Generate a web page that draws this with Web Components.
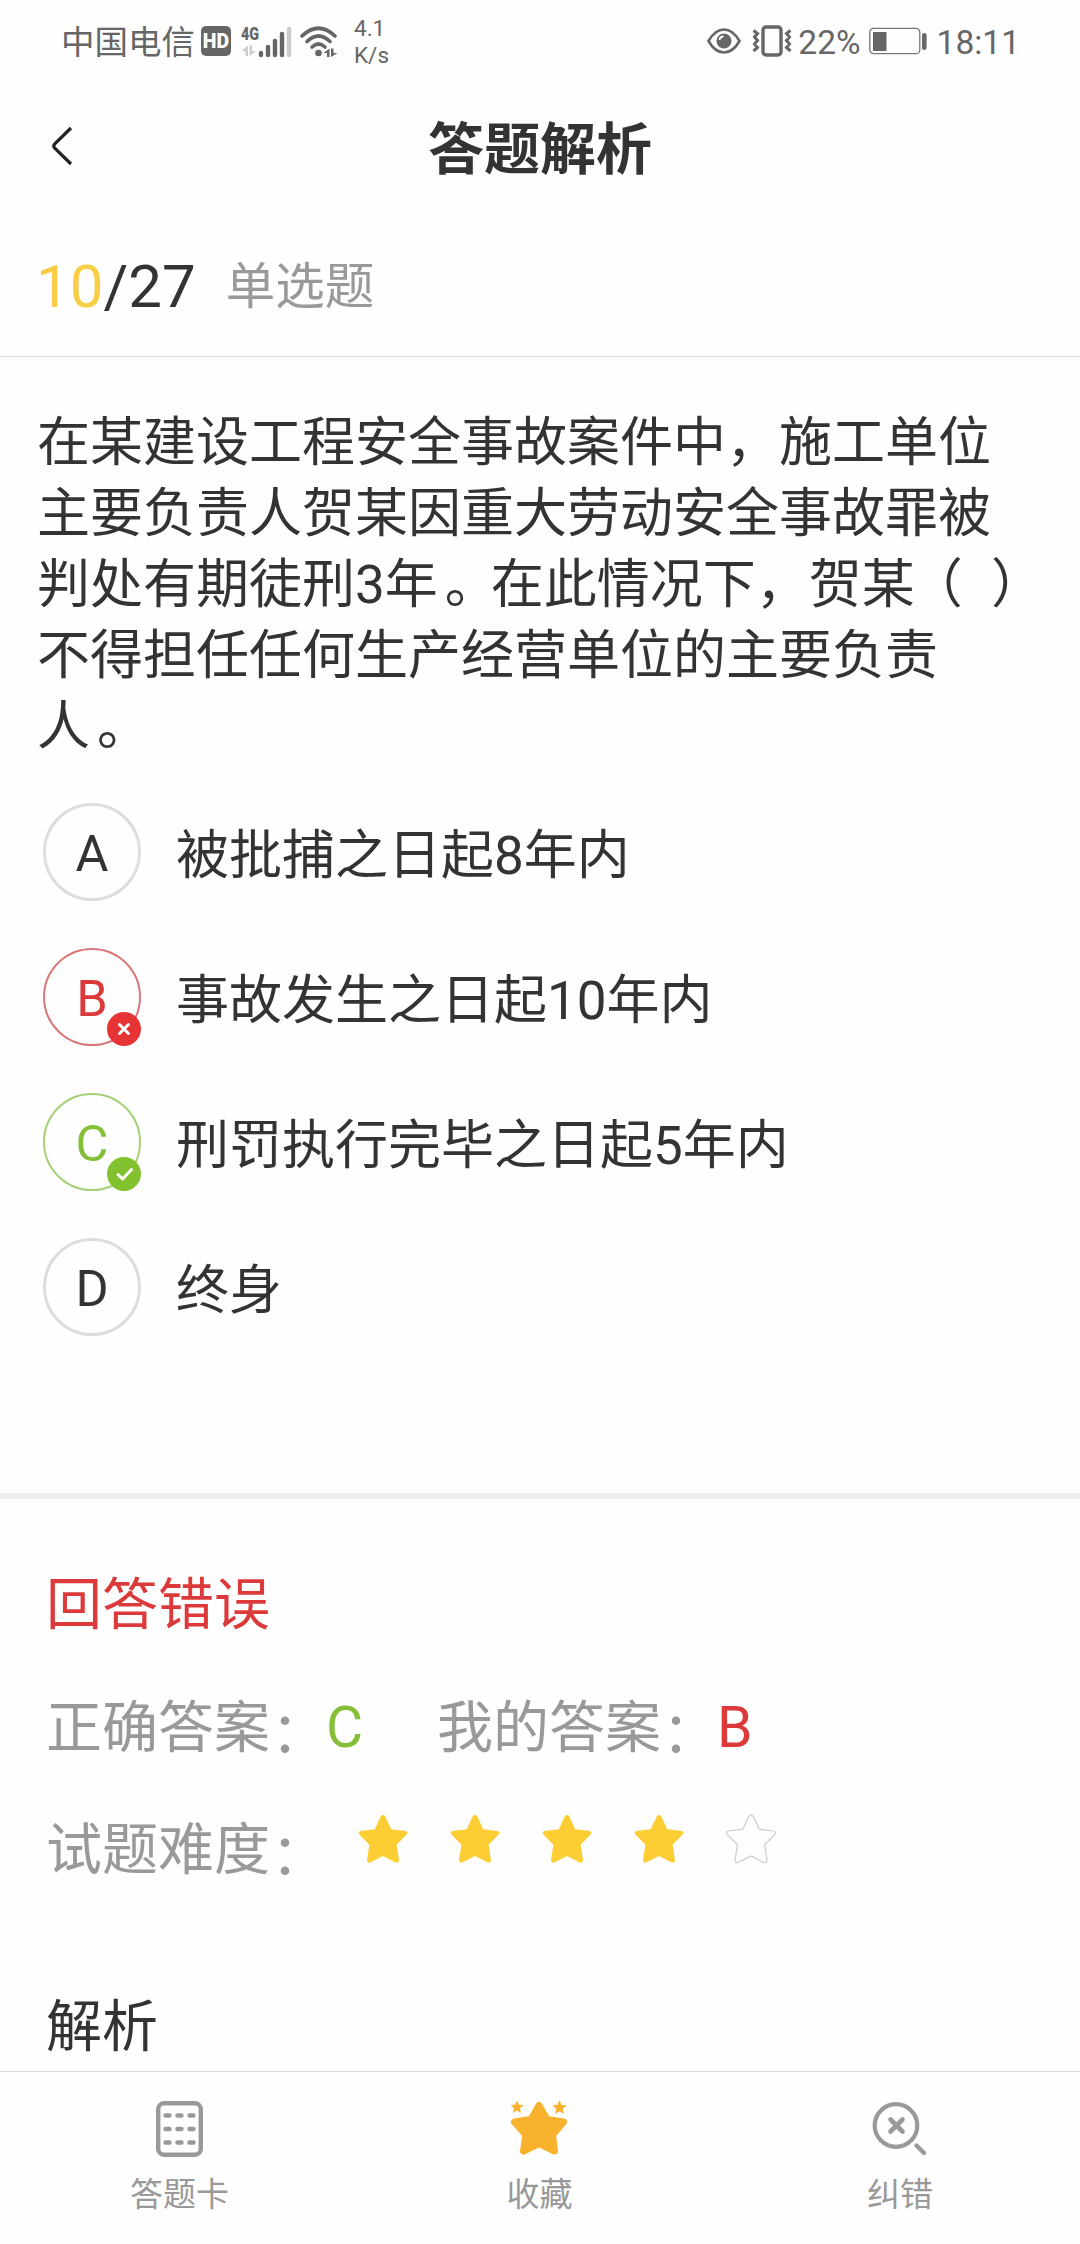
<!DOCTYPE html>
<html lang="zh-CN">
<head>
<meta charset="utf-8">
<title>答题解析</title>
<style>
  body{
    margin: 0;
    background: #fefefe;
    color: #333;
    font-family: Roboto, "Noto Sans CJK SC", sans-serif;
  }
</style>
</head>
<body>
<quiz-page>
  <status-bar slot="top"></status-bar>
  <page-header slot="top">答题解析</page-header>
  <question-counter current="10" total="27">单选题</question-counter>
  <question-text>在某建设工程安全事故案件中，施工单位<br>主要负责人贺某因重大劳动安全事故罪被<br>判处有期徒刑3年<span class="stop">。</span>在此情况下，贺某<span class="open">（</span> <span class="close">）</span><br>不得担任任何生产经营单位的主要负责<br>人<span class="stop">。</span></question-text>
  <answer-option letter="A">被批捕之日起8年内</answer-option>
  <answer-option letter="B" status="wrong">事故发生之日起10年内</answer-option>
  <answer-option letter="C" status="right">刑罚执行完毕之日起5年内</answer-option>
  <answer-option letter="D">终身</answer-option>
  <answer-result right="C" mine="B">
    <star-rating value="4"></star-rating>
  </answer-result>
  <tab-bar slot="bottom">
    <tab-item icon="card">答题卡</tab-item>
    <tab-item icon="favorite">收藏</tab-item>
    <tab-item icon="report">纠错</tab-item>
  </tab-bar>
</quiz-page>

<script>
class BaseElement extends HTMLElement {
  constructor() {
    super();
    this.attachShadow({ mode: 'open' });
  }

  connectedCallback() {
    this.shadowRoot.innerHTML = this.render();
  }
}

class QuizPage extends BaseElement {
  render() {
    return `
<style>
  :host{
    display: flex;
    flex-direction: column;
    width: 1080px;
    height: 2244px;
    overflow: hidden;
  }

  main{
    flex: 1;
    min-height: 0;
    overflow: hidden;
  }
</style>
<slot name="top"></slot>
<main><slot></slot></main>
<slot name="bottom"></slot>`;
  }
}

class StatusBar extends BaseElement {
  render() {
    return `
<style>
  :host{
    display: flex;
    justify-content: space-between;
    align-items: center;
    box-sizing: border-box;
    height: 82px;
    padding: 0 60px 0 61px;
    color: #666;
    font-size: 33.5px;
    line-height: 40px;
  }

  .side{
    display: flex;
    align-items: center;
    white-space: nowrap;
  }

  .side > span:not(.hd){
    padding-top: 3px;
  }

  svg{
    display: block;
    flex-shrink: 0;
  }

  .hd{
    width: 30px;
    height: 30px;
    margin-left: 6px;
    border-radius: 5px;
    background: #666;
    color: #fff;
    font-size: 19.5px;
    font-weight: 900;
    line-height: 31px;
    text-align: center;
  }

  .signal{
    margin-left: 9px;
  }

  .wifi{
    margin-left: 8px;
  }

  .speed{
    margin-left: 16px;
    padding-top: 2px;
    font-size: 22.5px;
    line-height: 27px;
  }

  .eye{
    margin-right: 11px;
  }

  .vibrate{
    margin-right: 5px;
  }

  .battery{
    margin: 0 10px 0 8px;
  }
</style>
<div class="side">
  <span>中国电信</span>
  <span class="hd">HD</span>
  <svg class="signal" width="52" height="34" viewBox="0 0 52 34">
    <text x="1" y="15.500" font-family="Roboto" font-size="18.500" font-weight="900" fill="#666" textLength="18" lengthAdjust="spacingAndGlyphs">4G</text>
    <path d="M1.500 27L8 21.500V32H5.500V27ZM16 27L9.500 32V21.500H12V27Z" fill="#ccc"/>
    <g stroke="#666" stroke-width="4.400" stroke-linecap="round">
      <path d="M21 29V31M28 23V31M35 17V31M42 10V31"/>
      <path d="M49 5V31" stroke="#ccc"/>
    </g>
  </svg>
  <svg class="wifi" width="38" height="34" viewBox="0 0 38 34">
    <g fill="none" stroke="#666" stroke-width="3.600" stroke-linecap="round">
      <path d="M2 12Q18.500-3.500 35 12"/>
      <path d="M7 17.500Q18.500 6.500 30 17.500"/>
      <path d="M12 23Q18.500 17 25 23"/>
    </g>
    <circle cx="18.500" cy="29" r="3.300" fill="#666"/>
    <path d="M23.500 29L29.500 24.500V33H27V29ZM37.500 29L31 33V24.500H33.500V29Z" fill="#666"/>
  </svg>
  <div class="speed">4.1<br>K/s</div>
</div>
<div class="side">
  <svg class="eye" width="34" height="26" viewBox="0 0 34 26">
    <path d="M1.500 13Q8 1.500 17 1.500T32.500 13Q26 24.500 17 24.500T1.500 13Z" fill="none" stroke="#666" stroke-width="2.600"/>
    <circle cx="17" cy="13" r="7.500" fill="#666"/>
    <path d="M12.500 12Q13 8.500 16.500 8.500" fill="none" stroke="#fefefe" stroke-width="1.800"/>
  </svg>
  <svg class="vibrate" width="41" height="32" viewBox="0 0 41 32">
    <rect x="11" y="2" width="18" height="28" rx="3" fill="none" stroke="#666" stroke-width="3.400"/>
    <path d="M1.500 5.500L5.500 8.500L2.500 12L5.500 15.500L2.500 19L5.500 22.500L1.500 26M38.500 5.500L34.500 8.500L37.500 12L34.500 15.500L37.500 19L34.500 22.500L38.500 26" fill="none" stroke="#666" stroke-width="3"/>
  </svg>
  <span>22%</span>
  <svg class="battery" width="58" height="28" viewBox="0 0 58 28">
    <rect x=".8" y="1.300" width="50" height="25.400" rx="4" fill="none" stroke="#777" stroke-width="1.300"/>
    <rect x="4" y="5" width="13.500" height="19" fill="#666"/>
    <rect x="53" y="6" width="4.600" height="17" rx="2.300" fill="#666"/>
  </svg>
  <span>18:11</span>
</div>`;
  }
}

class PageHeader extends BaseElement {
  render() {
    return `
<style>
  :host{
    display: grid;
    grid-template-columns: 120px 1fr 120px;
    align-items: center;
    height: 130px;
  }

  svg{
    display: block;
    margin: -3px 0 0 50px;
  }

  h1{
    margin: 6px 0 0;
    font-size: 56px;
    font-weight: bold;
    line-height: 80px;
    text-align: center;
  }
</style>
<svg width="24" height="40" viewBox="0 0 24 40">
  <path d="M21 2L4.500 18.200Q3 20 4.500 21.800L21 38" fill="none" stroke="#222" stroke-width="3.200"/>
</svg>
<h1><slot></slot></h1>`;
  }
}

class QuestionCounter extends BaseElement {
  render() {
    return `
<style>
  :host{
    display: flex;
    align-items: center;
    box-sizing: border-box;
    height: 145px;
    padding: 6px 0 0 36px;
    border-bottom: 1px solid #ddd;
  }

  .number{
    font-size: 60px;
    line-height: 72px;
  }

  .current{
    color: #f9ce46;
  }

  .type{
    margin-left: 30px;
    color: #999;
    font-size: 49.5px;
    line-height: 72px;
  }
</style>
<div class="number"><span class="current">${this.getAttribute('current')}</span>/${this.getAttribute('total')}</div>
<div class="type"><slot></slot></div>`;
  }
}

class QuestionText extends BaseElement {
  render() {
    return `
<style>
  :host{
    display: block;
    padding: 51px 0 16px 37px;
    font-size: 53px;
    line-height: 71px;
    white-space: nowrap;
  }

  /* half-width marks, spaced back out to a full cell */
  ::slotted(span){
    font-feature-settings: "halt";
  }

  ::slotted(.stop){
    margin: 0 19.5px 0 7px;
  }

  ::slotted(.open){
    margin: 0 5px 0 21.5px;
  }

  ::slotted(.close){
    margin-left: 10px;
  }
</style>
<slot></slot>`;
  }
}

const badges = {
  wrong: '<path d="M12.500 12.500L21.500 21.500M21.500 12.500L12.500 21.500"/>',
  right: '<path d="M11 17.500L15.500 22L24.500 12.500"/>'
};

class AnswerOption extends BaseElement {
  render() {
    const badge = badges[this.getAttribute('status')];
    return `
<style>
  :host{
    --mark: #333;
    --ring: #ddd;
    display: flex;
    align-items: center;
    height: 145px;
    padding-left: 43px;
    font-size: 53px;
    line-height: 72px;
  }

  :host([status="wrong"]){
    --mark: #dc3a3a;
    --ring: #d97878;
    --badge: #e63434;
  }

  :host([status="right"]){
    --mark: #85bf38;
    --ring: #a5cf77;
    --badge: #82c22e;
  }

  .circle{
    position: relative;
    box-sizing: border-box;
    width: 98px;
    height: 98px;
    border: 3px solid var(--ring);
    border-radius: 50%;
    color: var(--mark);
    font-size: 50.5px;
    line-height: 95px;
    text-align: center;
  }

  :host([status]) .circle{
    border-width: 2px;
    line-height: 97px;
  }

  svg{
    position: absolute;
    right: -2px;
    bottom: -2px;
    fill: none;
    stroke: #fff;
    stroke-width: 3;
    stroke-linecap: round;
    stroke-linejoin: round;
  }

  circle{
    fill: var(--badge);
    stroke: none;
  }

  .text{
    margin: 8px 0 0 35px;
  }
</style>
<div class="circle">${this.getAttribute('letter')}${badge ? `<svg width="34" height="34" viewBox="0 0 34 34"><circle cx="17" cy="17" r="17"/>${badge}</svg>` : ''}</div>
<div class="text"><slot></slot></div>`;
  }
}

class AnswerResult extends BaseElement {
  render() {
    return `
<style>
  :host{
    display: block;
    margin-top: 134px;
    padding: 70px 0 0 46px;
    border-top: 6px solid #eee;
    font-size: 56px;
    line-height: 72px;
  }

  .title{
    color: #dc3a3a;
  }

  .row{
    display: flex;
    align-items: center;
    margin-top: 51px;
    color: #999;
  }

  .row + .row{
    margin-top: 50px;
  }

  .colon{
    transform: translate(1px, 5px);
  }

  .letter{
    width: 111px;
    font-size: 57px;
  }

  .right{
    color: #85bf38;
  }

  .mine{
    color: #dc3a3a;
  }

  .analysis{
    margin-top: 105px;
  }
</style>
<div class="title">回答错误</div>
<div class="row">
  <span>正确答案</span><span class="colon">：</span>
  <span class="letter right">${this.getAttribute('right')}</span>
  <span>我的答案</span><span class="colon">：</span>
  <span class="letter mine">${this.getAttribute('mine')}</span>
</div>
<div class="row">
  <span>试题难度</span><span class="colon">：</span>
  <slot></slot>
</div>
<div class="analysis">解析</div>`;
  }
}

class StarRating extends BaseElement {
  render() {
    const value = Number(this.getAttribute('value'));
    let stars = '';
    for (let i = 1; i <= 5; i++) {
      stars += `<svg class="${i <= value ? 'full' : ''}" width="52" height="50" viewBox="0 0 52 50">
  <path d="M23.800 2.300Q26 -.4 28.200 2.300L34.200 15.200L48.600 17Q51.600 17.800 49.600 20.500L39.600 30.700L42 46Q42 49.300 38.800 48.500L26 42L13.200 48.500Q10 49.300 10 46L12.400 30.700L2.400 20.500Q.4 17.800 3.400 17L17.800 15.200Z"/>
</svg>`;
    }
    return `
<style>
  :host{
    display: flex;
    gap: 40px;
    margin: -23px 0 0 30.5px;
  }

  svg{
    display: block;
    fill: none;
    stroke: #ccc;
    stroke-width: 1.200;
  }

  .full{
    fill: #fdcd34;
    stroke: none;
  }
</style>
${stars}`;
  }
}

class TabBar extends BaseElement {
  render() {
    return `
<style>
  :host{
    display: grid;
    grid-template-columns: repeat(3, 1fr);
    height: 172px;
    border-top: 1px solid #ddd;
  }
</style>
<slot></slot>`;
  }
}

const smallStar = 'M0-6.500L1.900-2.300L6.500-2L3 1.200L4 6L0 3.500L-4 6L-3 1.200L-6.500-2L-1.900-2.300Z';

const icons = {
  card: `<rect x="8.200" y="4.200" width="42.600" height="51.600" rx="6" fill="none" stroke="#999" stroke-width="4.400"/>
    <path d="M15.500 16.500H19.500M27.500 16.500H31.500M39.500 16.500H43.500M15.500 30H19.500M27.500 30H31.500M39.500 30H43.500M15.500 43.500H19.500M27.500 43.500H31.500M39.500 43.500H43.500" stroke="#999" stroke-width="4.400" stroke-linecap="round"/>`,
  favorite: `<path d="M29 6.500L37 20.500L53.500 23L42.500 36L44.500 52L29 44.500L13.500 52L16 36L4.500 23L21 20.500Z" fill="#f8b22d" stroke="#f8b22d" stroke-width="7" stroke-linejoin="round"/>
    <path d="${smallStar}" transform="translate(7 8)" fill="#f8b22d"/>
    <path d="${smallStar}" transform="translate(49.500 8.500) scale(1.100)" fill="#f8b22d"/>`,
  report: `<g fill="none" stroke="#999" stroke-linecap="round">
      <circle cx="26" cy="26.500" r="21.300" stroke-width="4.200"/>
      <path d="M20.500 20.500L32.500 32.500M32.500 20.500L20.500 32.500" stroke-width="4.600"/>
      <path d="M46.500 46.500L54 54" stroke-width="4.400"/>
    </g>`
};

class TabItem extends BaseElement {
  render() {
    return `
<style>
  :host{
    display: flex;
    flex-direction: column;
    align-items: center;
    padding: 27px 1px 0 0;
    color: #999;
    font-size: 33px;
    line-height: 40px;
  }

  :host([icon="report"]){
    padding-right: 0;
  }

  svg{
    display: block;
    margin-bottom: 16px;
  }
</style>
<svg width="60" height="60" viewBox="0 0 60 60">${icons[this.getAttribute('icon')]}</svg>
<slot></slot>`;
  }
}

customElements.define('quiz-page', QuizPage);
customElements.define('status-bar', StatusBar);
customElements.define('page-header', PageHeader);
customElements.define('question-counter', QuestionCounter);
customElements.define('question-text', QuestionText);
customElements.define('answer-option', AnswerOption);
customElements.define('answer-result', AnswerResult);
customElements.define('star-rating', StarRating);
customElements.define('tab-bar', TabBar);
customElements.define('tab-item', TabItem);
</script>
</body>
</html>
